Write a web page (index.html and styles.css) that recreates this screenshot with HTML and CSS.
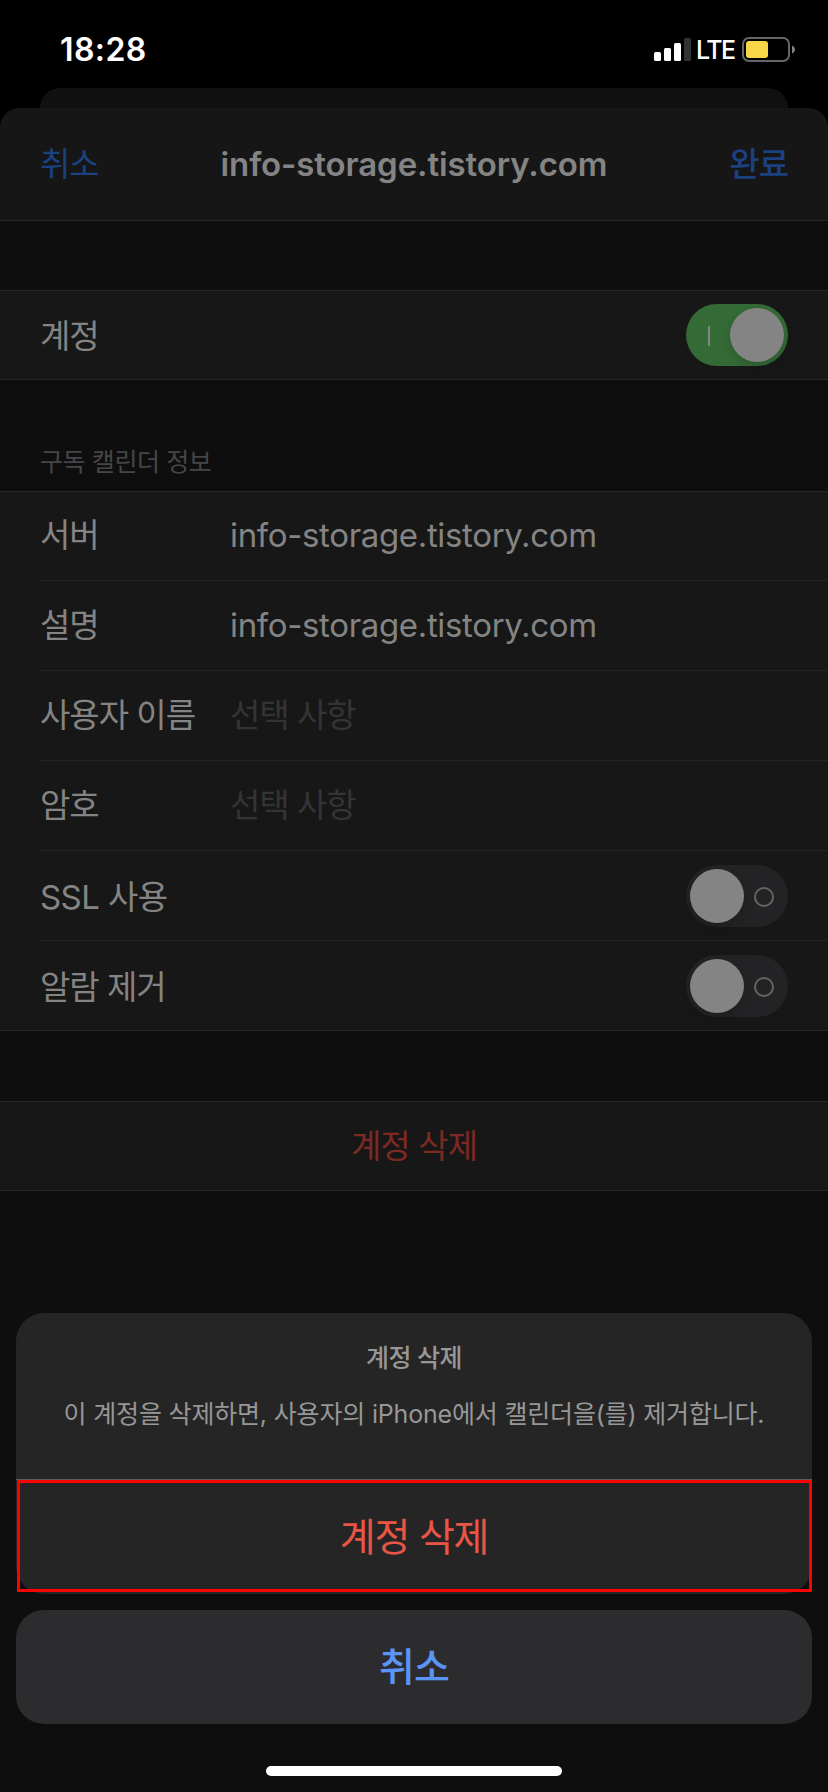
FILE: index.html
```html
<!DOCTYPE html>
<html lang="ko">
<head>
    <meta charset="UTF-8">
    <meta name="viewport" content="width=device-width, initial-scale=1.0">
    <title>info-storage.tistory.com</title>
    <link rel="stylesheet" href="styles.css">
</head>
<body>
    <div class="phone">
        <!-- Status bar -->
        <div class="status-bar">
            <span class="time">18:28</span>
            <div class="status-icons">
                <svg class="signal" width="37" height="24" viewBox="0 0 37 24">
                    <rect x="0" y="14" width="7" height="9" rx="1.5" fill="#fff"/>
                    <rect x="10" y="10" width="7" height="13" rx="1.5" fill="#fff"/>
                    <rect x="20" y="5" width="7" height="18" rx="1.5" fill="#fff"/>
                    <rect x="30" y="0" width="7" height="23" rx="1.5" fill="#333"/>
                </svg>
                <span class="network">LTE</span>
                <svg class="battery" width="53" height="25" viewBox="0 0 53 25">
                    <rect x="1" y="1" width="46" height="23" rx="6" fill="none" stroke="#666" stroke-width="2"/>
                    <rect x="4" y="4" width="22" height="17" rx="3" fill="#f8d648"/>
                    <path d="M50 8.500c4 1.500 4 6.500 0 8z" fill="#808080"/>
                </svg>
            </div>
        </div>

        <div class="back-sheet"></div>

        <div class="sheet">
            <div class="nav">
                <span class="nav-cancel">취소</span>
                <span class="nav-title">info-storage.tistory.com</span>
                <span class="nav-done">완료</span>
            </div>

            <div class="group">
                <div class="row">
                    <span class="label">계정</span>
                    <span class="toggle on"><i class="mark"></i><i class="knob"></i></span>
                </div>
            </div>

            <div class="group-title">구독 캘린더 정보</div>
            <div class="group info-group">
                <div class="row field">
                    <span class="label">서버</span>
                    <span class="value">info-storage.tistory.com</span>
                </div>
                <div class="row field">
                    <span class="label">설명</span>
                    <span class="value">info-storage.tistory.com</span>
                </div>
                <div class="row field">
                    <span class="label">사용자 이름</span>
                    <span class="placeholder">선택 사항</span>
                </div>
                <div class="row field">
                    <span class="label">암호</span>
                    <span class="placeholder">선택 사항</span>
                </div>
                <div class="row">
                    <span class="label ssl">SSL 사용</span>
                    <span class="toggle"><i class="knob"></i><i class="mark"></i></span>
                </div>
                <div class="row">
                    <span class="label">알람 제거</span>
                    <span class="toggle"><i class="knob"></i><i class="mark"></i></span>
                </div>
            </div>

            <div class="group delete-group">
                <div class="delete-row">계정 삭제</div>
            </div>
        </div>

        <!-- Action sheet -->
        <div class="action-sheet">
            <div class="action-card">
                <div class="action-info">
                    <div class="action-title">계정 삭제</div>
                    <div class="action-message">이 계정을 삭제하면, 사용자의 iPhone에서 캘린더을(를) 제거합니다.</div>
                </div>
                <div class="action-delete">계정 삭제</div>
                <div class="highlight"></div>
            </div>
            <div class="action-cancel">취소</div>
            <div class="home-indicator"></div>
        </div>
    </div>
</body>
</html>
```
FILE: styles.css
```css
* {
    box-sizing: border-box;
}
body {
    margin: 0;
    background-color: #000;
    font-family: Inter, "Noto Sans CJK KR", sans-serif;
}
.phone {
    position: relative;
    width: 828px;
    height: 1792px;
    overflow: hidden;
    font-size: 33px;
    color: #848484;
    white-space: nowrap;
    display: flex;
    flex-direction: column;
}
.status-bar {
    height: 88px;
    padding: 11px 33px 0 60px;
    display: flex;
    justify-content: space-between;
    align-items: center;
    color: #fff;
}
.time {
    font-size: 32px;
    font-weight: 600;
    letter-spacing: 0.4px;
}
.status-icons {
    display: flex;
    align-items: center;
}
.network {
    width: 38px;
    margin: 0 8px 0 5px;
    font-size: 25px;
    font-weight: 500;
    letter-spacing: -1.5px;
}
.back-sheet {
    height: 20px;
    margin: 0 40px;
    background-color: #101010;
    border-radius: 20px 20px 0 0;
}
.sheet {
    flex: 1;
    background-color: #0e0e0e;
    border-radius: 20px 20px 0 0;
}
.nav {
    height: 113px;
    padding: 0 40px;
    display: grid;
    grid-template-columns: 1fr auto 1fr;
    align-items: center;
    background-color: #161616;
    border-bottom: 1px solid #262626;
    border-radius: 20px 20px 0 0;
    margin-bottom: 69px;
}
.nav-cancel, .nav-done {
    padding-bottom: 4px;
    color: #1b4180;
    letter-spacing: -1px;
}
.nav-done {
    text-align: right;
    font-weight: 500;
}
.nav-title {
    font-weight: 600;
    letter-spacing: -0.1px;
}
.group {
    background-color: #171717;
    border-top: 1px solid #262626;
    border-bottom: 1px solid #262626;
}
.row {
    display: flex;
    align-items: center;
    height: 90px;
    margin-left: 40px;
    padding-right: 40px;
    border-bottom: 1px solid #232323;
}
.row:last-child {
    height: 88px;
    border-bottom: none;
}
.info-group .row:first-child, .info-group .row:last-child {
    height: 89px;
}
.label {
    width: 190px;
    padding-bottom: 2px;
    letter-spacing: -1px;
}
.label.ssl {
    letter-spacing: -0.6px;
}
.field .label, .placeholder {
    padding-bottom: 6px;
}
.value {
    padding-bottom: 2px;
    letter-spacing: -0.34px;
}
.placeholder {
    color: #343436;
    letter-spacing: -1px;
}
.group-title {
    height: 111px;
    padding: 66px 40px 0;
    font-size: 25px;
    line-height: 32px;
    letter-spacing: -0.4px;
    color: #464648;
}
.toggle {
    display: flex;
    align-items: center;
    width: 102px;
    height: 62px;
    margin-left: auto;
    padding: 4px;
    border-radius: 31px;
    background-color: #232325;
}
.knob {
    width: 54px;
    height: 54px;
    border-radius: 50%;
    background-color: #848484;
    box-shadow: 0 4px 10px rgba(0, 0, 0, 0.15);
}
.mark {
    width: 20px;
    height: 20px;
    margin: 2px 0 0 10px;
    border: 2px solid #646464;
    border-radius: 50%;
}
.toggle.on {
    background-color: #346a35;
}
.toggle.on .mark {
    width: 2px;
    margin: 2px 20px 0 18px;
    border: none;
    border-radius: 0;
    background-color: #848484;
}
.delete-group {
    margin-top: 70px;
}
.delete-row {
    height: 88px;
    line-height: 88px;
    text-align: center;
    letter-spacing: -0.9px;
    color: #7d2a24;
}
.action-sheet {
    position: absolute;
    left: 16px;
    right: 16px;
    bottom: 16px;
}
.action-card {
    position: relative;
    height: 281px;
    margin-bottom: 16px;
    border-radius: 28px;
    background-color: #252525;
    text-align: center;
}
.action-info {
    height: 167px;
    padding-top: 29px;
    border-bottom: 1px solid #5c5c5c;
    color: #979797;
    font-size: 25px;
    line-height: 32px;
    letter-spacing: -0.5px;
}
.action-title {
    font-weight: 500;
    margin-bottom: 24px;
}
.action-message {
    letter-spacing: -0.18px;
}
.action-delete {
    height: 114px;
    line-height: 113px;
    font-size: 39px;
    letter-spacing: -1.2px;
    color: #ea5545;
}
/* red frame over the delete button */
.highlight {
    position: absolute;
    left: 1px;
    right: 0;
    top: 167px;
    height: 112px;
    border: 3px solid #f00;
}
.action-cancel {
    height: 114px;
    line-height: 113px;
    border-radius: 28px;
    background-color: #2c2c2e;
    color: #5b94f6;
    font-size: 39px;
    font-weight: 500;
    letter-spacing: -1px;
    text-align: center;
}
.home-indicator {
    width: 296px;
    height: 10px;
    margin: 42px auto 0;
    border-radius: 5px;
    background-color: #fff;
}
```
